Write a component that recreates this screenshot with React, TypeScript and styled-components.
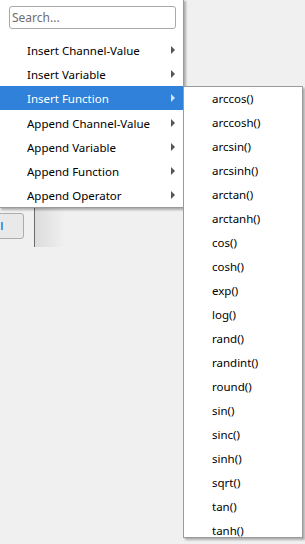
import * as React from "react";
import styled, { createGlobalStyle } from "styled-components";

const GlobalStyle = createGlobalStyle`
  html, body {
    margin: 0;
    padding: 0;
    background: #f0f0f0;
  }
  body {
    font-family: "Noto Sans", "Open Sans", sans-serif;
    font-size: 11.5px;
    color: #000;
  }
`;

const Screen = styled.div`
  position: relative;
  width: 305px;
  height: 544px;
  overflow: hidden;
  background: #f0f0f0;
`;

const Backdrop = styled.div`
  display: flex;
  padding-top: 207px;
  height: 40px;
`;

const ButtonCell = styled.div`
  width: 34px;
  padding-top: 6px;
  overflow: hidden;
`;

const PushButton = styled.div`
  width: 50px;
  height: 24px;
  margin-left: -28px;
  border: 1px solid #adadad;
  border-radius: 3px;
  background: #e9e9e9;
  display: flex;
  align-items: center;
`;

const FocusMark = styled.div`
  width: 2px;
  height: 8px;
  margin-left: 28px;
  background: #3aa0e8;
`;

const PanelEdge = styled.div`
  width: 30px;
  border-left: 1px solid #6b6b6b;
  background: linear-gradient(90deg, #dcdcdc, #f0f0f0);
`;

const Menu = styled.div`
  position: absolute;
  background: #fff;
  border: 1px solid #9a9a9a;
  box-shadow: 2px 2px 2px rgba(0, 0, 0, 0.28);
`;

const MainMenu = styled(Menu)`
  left: -1px;
  top: -1px;
  width: 183px;
`;

const SubMenu = styled(Menu)`
  left: 183px;
  top: 86px;
  width: 118px;
  height: 450px;
`;

const Rows = styled.div`
  margin-top: -1px;
`;

const SearchRow = styled.div`
  padding: 6px 0 0 9px;
  height: 33px;
  box-sizing: border-box;
`;

const SearchBox = styled.input`
  box-sizing: border-box;
  width: 167px;
  height: 23px;
  border: 1px solid #a9a9a9;
  border-radius: 3px;
  padding: 0 2px;
  font-family: inherit;
  font-size: 12px;
  outline: none;
  &::placeholder {
    color: #6d6d6d;
  }
`;

const Gap = styled.div<{ $h: number }>`
  height: ${(p) => p.$h}px;
`;

const Item = styled.div<{ $active?: boolean; $indent: number }>`
  height: 24px;
  display: flex;
  align-items: center;
  padding-left: ${(p) => p.$indent}px;
  padding-right: 6px;
  background: ${(p) => (p.$active ? "#2f81d9" : "transparent")};
  color: ${(p) => (p.$active ? "#fff" : "#000")};
  white-space: nowrap;
`;

const Label = styled.span`
  flex: 1;
`;

const Arrow = styled.span<{ $active?: boolean }>`
  width: 0;
  height: 0;
  border-top: 4px solid transparent;
  border-bottom: 4px solid transparent;
  border-left: 4px solid ${(p) => (p.$active ? "#cfe3f8" : "#555")};
  margin-right: 2px;
`;

const mainItems = [
  "Insert Channel-Value",
  "Insert Variable",
  "Insert Function",
  "Append Channel-Value",
  "Append Variable",
  "Append Function",
  "Append Operator",
];

const functions = [
  "arccos()",
  "arccosh()",
  "arcsin()",
  "arcsinh()",
  "arctan()",
  "arctanh()",
  "cos()",
  "cosh()",
  "exp()",
  "log()",
  "rand()",
  "randint()",
  "round()",
  "sin()",
  "sinc()",
  "sinh()",
  "sqrt()",
  "tan()",
  "tanh()",
];

const App = () => (
  <Screen>
    <GlobalStyle />
    <Backdrop>
      <ButtonCell>
        <PushButton>
          <FocusMark />
        </PushButton>
      </ButtonCell>
      <PanelEdge />
    </Backdrop>

    <MainMenu>
      <SearchRow>
        <SearchBox placeholder="Search..." />
      </SearchRow>
      <Gap $h={5} />
      {mainItems.map((name, i) => (
        <React.Fragment key={name}>
          {i === 3 && <Gap $h={1} />}
          <Item $indent={27} $active={i === 2}>
            <Label>{name}</Label>
            <Arrow $active={i === 2} />
          </Item>
        </React.Fragment>
      ))}
    </MainMenu>

    <SubMenu>
      <Rows>
        {functions.map((f) => (
          <Item key={f} $indent={28}>
            <Label>{f}</Label>
          </Item>
        ))}
      </Rows>
    </SubMenu>
  </Screen>
);

export default App;
